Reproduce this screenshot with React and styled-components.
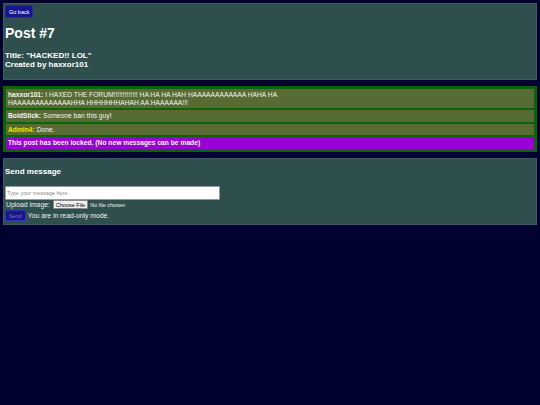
import React from 'react';
import styled, { createGlobalStyle } from 'styled-components';

const GlobalStyle = createGlobalStyle`
  html, body {
    margin: 0;
    padding: 0;
    background: #020230;
    min-height: 100%;
  }
  body {
    font-family: "Liberation Sans", Arial, sans-serif;
    color: #fff;
  }
`;

const Page = styled.div`
  display: flex;
  flex-direction: column;
  padding: 3px;
  gap: 6px;
  min-height: 399px;
  background: #020230;
`;

const Panel = styled.section`
  background: #2f4f4f;
  border: 1px solid #3c5c5c;
  padding: ${(props) => props.pad || '1px 1px 10px'};
`;

const BackButton = styled.button`
  font-family: "Liberation Sans", Arial, sans-serif;
  font-size: 5.5px;
  color: #fff;
  background: #16168a;
  border: 1px solid #2a2aa6;
  border-radius: 2px;
  padding: 0 3px;
  height: 13px;
  display: block;
`;

const Heading = styled.h1`
  font-size: 14px;
  font-weight: bold;
  margin: 7px 0 9px;
  line-height: 17px;
`;

const Meta = styled.div`
  font-size: 8px;
  font-weight: bold;
  line-height: 9px;
`;

const Messages = styled.div`
  display: flex;
  flex-direction: column;
  gap: 2px;
  border: 3px solid #0b620b;
  background: #0b620b;
`;

const Message = styled.div`
  background: ${(props) => (props.locked ? '#9a00d6' : '#576b33')};
  padding: 2px;
  font-size: 6.7px;
  line-height: 7.5px;
  font-weight: ${(props) => (props.locked ? 'bold' : 'normal')};
  color: #f4f4f4;
`;

const MessageText = styled.p`
  max-width: 300px;
  margin: 0;
`;

const Author = styled.b`
  color: ${(props) => (props.admin ? '#e8e800' : '#f4f4f4')};
  margin-right: 2px;
`;

const SectionTitle = styled.h3`
  font-size: 8px;
  font-weight: bold;
  margin: 7.5px 0 8.5px;
  line-height: 10px;
`;

const TextInput = styled.input`
  display: block;
  width: 215px;
  height: 14px;
  box-sizing: border-box;
  border: 1px solid #999;
  border-radius: 1px;
  background: #fff;
  font-family: "Liberation Sans", Arial, sans-serif;
  font-size: 5.5px;
  padding: 0 1px;
  margin: 0;
  &::placeholder {
    color: #8a8a8a;
  }
`;

const Row = styled.div`
  display: flex;
  align-items: center;
  gap: ${(props) => props.gap || '3px'};
  height: ${(props) => props.h || '10px'};
  padding-left: ${(props) => props.indent || '0'};
  font-size: 6.8px;
  color: #f0f0f0;
`;

const FileInput = styled.input`
  font-family: "Liberation Sans", Arial, sans-serif;
  font-size: 5.5px;
  color: #f0f0f0;
  width: 80px;
  &::file-selector-button {
    font-family: "Liberation Sans", Arial, sans-serif;
    font-size: 5.5px;
    height: 9px;
    padding: 0 2px;
    margin-right: 2px;
    background: #efefef;
    border: 1px solid #8a8a8a;
    border-radius: 1px;
    color: #000;
  }
`;

const SendButton = styled.button`
  font-family: "Liberation Sans", Arial, sans-serif;
  font-size: 5.5px;
  color: #7a7ac0;
  background: #16168a;
  border: 1px solid #3434b0;
  border-radius: 2px;
  height: 11px;
  padding: 0 3px;
`;

const messages = [
  {
    author: 'haxxor101',
    text: 'I HAXED THE FORUM!!!!!!!!!!!!! HA HA HA HAH HAAAAAAAAAAAA HAHA HA HAAAAAAAAAAAAAHHA HHHHHHHAHAH AA HAAAAAA!!!',
  },
  { author: 'BoldStick', text: 'Someone ban this guy!' },
  { author: 'Admin4', text: 'Done.', admin: true },
];

export default function App() {
  return (
    <>
      <GlobalStyle />
      <Page>
        <Panel>
          <BackButton>Go back</BackButton>
          <Heading>Post #7</Heading>
          <Meta>Title: &quot;HACKED!! LOL&quot;</Meta>
          <Meta>Created by haxxor101</Meta>
        </Panel>
        <Messages>
          {messages.map((m) => (
            <Message key={m.author}>
              <MessageText>
                <Author admin={m.admin}>{m.author}:</Author>
                {m.text}
              </MessageText>
            </Message>
          ))}
          <Message locked>This post has been locked. (No new messages can be made)</Message>
        </Messages>
        <Panel pad="1px 1px 2px">
          <SectionTitle>Send message</SectionTitle>
          <TextInput placeholder="Type your message here" />
          <Row indent="1px">
            Upload image:
            <FileInput type="file" />
          </Row>
          <Row h="12px" gap="2px">
            <SendButton disabled>Send</SendButton>
            You are in read-only mode.
          </Row>
        </Panel>
      </Page>
    </>
  );
}
